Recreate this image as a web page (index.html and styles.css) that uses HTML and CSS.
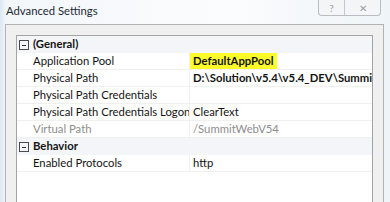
FILE: index.html
```html
<!DOCTYPE html>
<html lang="en">
<head>
    <meta charset="UTF-8">
    <title>Advanced Settings</title>
    <link rel="stylesheet" href="styles.css">
</head>
<body>

    <div class="titlebar">
        <span class="title">Advanced Settings</span>
        <div class="caption-btns">
            <span class="cap-btn help">?</span>
            <span class="cap-btn close">&#x2715;</span>
        </div>
    </div>

    <div class="panel">
        <div class="grid">
            <!-- General -->
            <div class="row category">
                <span class="toggle"></span>
                <span class="name">(General)</span>
            </div>
            <div class="row">
                <span class="margin"></span>
                <span class="name">Application Pool</span>
                <span class="value bold"><span class="marker">DefaultAppPool</span></span>
            </div>
            <div class="row">
                <span class="margin"></span>
                <span class="name">Physical Path</span>
                <span class="value bold">D:\Solution\v5.4\v5.4_DEV\SummitWebV54</span>
            </div>
            <div class="row">
                <span class="margin"></span>
                <span class="name">Physical Path Credentials</span>
                <span class="value"></span>
            </div>
            <div class="row">
                <span class="margin"></span>
                <span class="name">Physical Path Credentials Logon Type</span>
                <span class="value">ClearText</span>
            </div>
            <div class="row readonly">
                <span class="margin"></span>
                <span class="name">Virtual Path</span>
                <span class="value">/SummitWebV54</span>
            </div>

            <!-- Behavior -->
            <div class="row category">
                <span class="toggle"></span>
                <span class="name">Behavior</span>
            </div>
            <div class="row">
                <span class="margin"></span>
                <span class="name">Enabled Protocols</span>
                <span class="value">http</span>
            </div>
        </div>
    </div>

</body>
</html>
```

FILE: styles.css
```css
body {
    margin: 0;
    width: 390px;
    height: 202px;
    overflow: hidden;
    font-family: 'Lato', 'Open Sans', sans-serif;
    font-size: 11.3px;
    color: #141414;
    background: linear-gradient(90deg, #dbe7f1 0px, #f3f7fa 6px, #fbfcfd 60%, #eef4f8 100%);
}
.titlebar {
    height: 24px;
    display: flex;
    justify-content: space-between;
    align-items: flex-start;
}
.title {
    margin: 4px 0 0 6px;
    font-size: 11.3px;
    color: #1f2a36;
}
.caption-btns {
    display: flex;
    margin-right: 9px;
    border: 1px solid #b9bcc0;
    border-top: none;
    border-radius: 0 0 4px 4px;
    background: #f4f5f6;
    height: 15px;
}
.cap-btn {
    display: flex;
    align-items: center;
    justify-content: center;
    height: 15px;
    color: #9a9ea3;
    font-size: 10px;
}
.help {
    width: 25px;
    border-right: 1px solid #c6c9cc;
}
.close {
    width: 35px;
}
.panel {
    margin-left: 5px;
    width: 357px;
    height: 200px;
    border: 1px solid #b3b3b3;
    background: #f0f0f0;
    padding: 10px 10px 0 10px;
}
.grid {
    border: 1px solid #a3a3a3;
    background: white;
    height: 200px;
    overflow: hidden;
}
.row {
    display: grid;
    grid-template-columns: 16px 157px 1fr;
    height: 17px;
    line-height: 16px;
    border-bottom: 1px solid #f0f0f0;
    box-sizing: border-box;
    white-space: nowrap;
    overflow: hidden;
}
.row .name {
    overflow: hidden;
    border-right: 1px solid #f0f0f0;
}
.row .value {
    padding-left: 3px;
    overflow: hidden;
}
.category {
    background: #f3f5f9;
    font-weight: bold;
    border-bottom: none;
}
.category .name {
    border-right: none;
}
.toggle {
    width: 8px;
    height: 8px;
    margin: 4px 0 0 2px;
    border: 1px solid #4a4a4a;
    position: relative;
}
.toggle::after {
    content: "";
    position: absolute;
    left: 2px;
    top: 3.5px;
    width: 4px;
    height: 1px;
    background: #333;
}
.bold {
    font-weight: bold;
}
.marker {
    background: #fdfd2a;
    padding: 1px 3px 2px 3px;
    margin-left: -3px;
}
.readonly {
    color: #8d8d8d;
}
```
